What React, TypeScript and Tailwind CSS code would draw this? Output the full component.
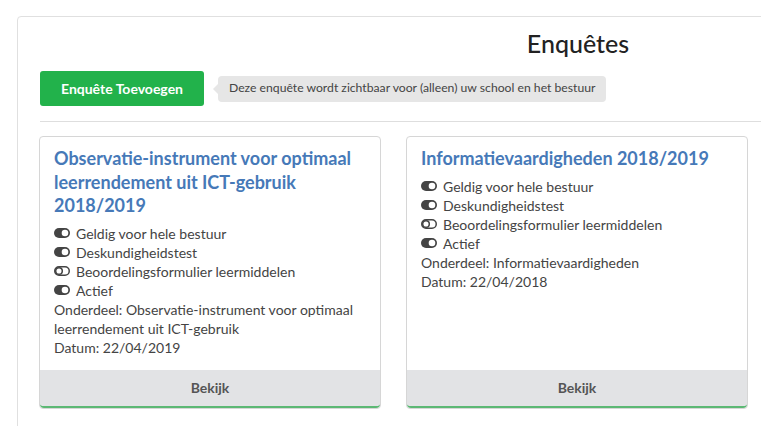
import React from "react";

type Survey = {
  title: string;
  flags: { label: string; on: boolean }[];
  section: string;
  date: string;
};

const surveys: Survey[] = [
  {
    title: "Observatie-instrument voor optimaal leerrendement uit ICT-gebruik 2018/2019",
    flags: [
      { label: "Geldig voor hele bestuur", on: true },
      { label: "Deskundigheidstest", on: true },
      { label: "Beoordelingsformulier leermiddelen", on: false },
      { label: "Actief", on: true },
    ],
    section: "Observatie-instrument voor optimaal leerrendement uit ICT-gebruik",
    date: "22/04/2019",
  },
  {
    title: "Informatievaardigheden 2018/2019",
    flags: [
      { label: "Geldig voor hele bestuur", on: true },
      { label: "Deskundigheidstest", on: true },
      { label: "Beoordelingsformulier leermiddelen", on: false },
      { label: "Actief", on: true },
    ],
    section: "Informatievaardigheden",
    date: "22/04/2018",
  },
];

// font-awesome 4 style toggles
const Toggle = ({ on }: { on: boolean }) =>
  on ? (
    <svg width="16" height="10" viewBox="0 0 16 10" className="shrink-0">
      <rect x="0" y="0" width="16" height="10" rx="5" fill="#444" />
      <circle cx="11" cy="5" r="3.3" fill="#fff" />
    </svg>
  ) : (
    <svg width="16" height="10" viewBox="0 0 16 10" className="shrink-0">
      <rect x="0.75" y="0.75" width="14.5" height="8.5" rx="4.25" fill="none" stroke="#444" strokeWidth="1.5" />
      <circle cx="5" cy="5" r="3.3" fill="none" stroke="#444" strokeWidth="1.5" />
    </svg>
  );

const SurveyCard = ({ s }: { s: Survey }) => (
  <div className="w-[342px] flex flex-col border border-[#d6d6d6] rounded-[4px] bg-white">
    <div className="flex-1 px-[14px] pt-[10px] pb-[13px]">
      <h3 className="text-[18px] leading-[23.5px] font-bold text-[#4679b8] mb-[6px]">{s.title}</h3>
      <div className="text-[14px] leading-[19px] text-[#444]">
        {s.flags.map((f) => (
          <div key={f.label} className="flex items-center gap-[6px]">
            <Toggle on={f.on} />
            <span>{f.label}</span>
          </div>
        ))}
        <p>Onderdeel: {s.section}</p>
        <p>Datum: {s.date}</p>
      </div>
    </div>
    <button className="h-[38px] bg-[#e2e3e5] border-b-2 border-[#5cb874] rounded-b-[4px] text-[14px] font-bold text-[#555]">
      Bekijk
    </button>
  </div>
);

export default function App() {
  return (
    <div className="w-[761px] h-[426px] overflow-hidden bg-white font-['Lato',sans-serif]">
      <div className="ml-[17px] mt-[16px] w-[1122px] border border-[#e0e0e0] rounded-[4px] px-[22px] pt-[10px] pb-6">
        <h1 className="text-center text-[25px] leading-[32px] font-medium text-[#222]">Enquêtes</h1>

        <div className="mt-[12px] flex items-center">
          <button className="h-[35px] w-[164px] bg-[#22b24b] rounded-[3px] text-white text-[14px] font-bold">
            Enquête Toevoegen
          </button>
          <div className="relative ml-[14px] h-[26px] flex items-center rounded-[4px] bg-[#e6e6e6] px-[11px] text-[12.2px] text-[#444]">
            <span className="absolute -left-[5px] top-1/2 -translate-y-1/2 w-0 h-0 border-y-[5px] border-y-transparent border-r-[5px] border-r-[#e6e6e6]" />
            Deze enquête wordt zichtbaar voor (alleen) uw school en het bestuur
          </div>
        </div>

        <hr className="mt-[15px] border-t border-[#dedede]" />

        <div className="mt-[14px] -ml-px flex gap-[25px]">
          {surveys.map((s) => (
            <SurveyCard key={s.title} s={s} />
          ))}
        </div>
      </div>
    </div>
  );
}
